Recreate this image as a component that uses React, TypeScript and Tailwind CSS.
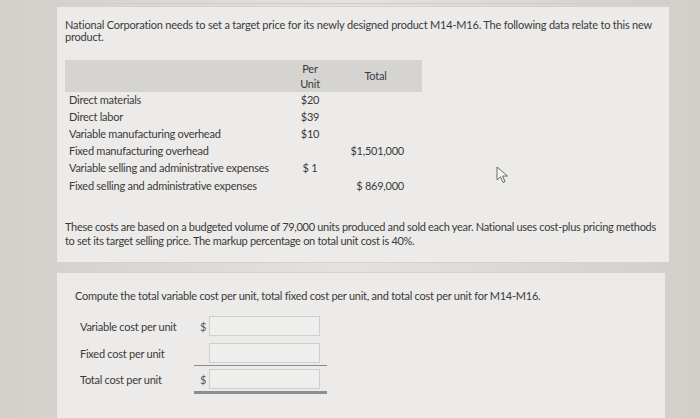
import React from "react";

const rows = [
  { label: "Direct materials", unit: "$20", total: "" },
  { label: "Direct labor", unit: "$39", total: "" },
  { label: "Variable manufacturing overhead", unit: "$10", total: "" },
  { label: "Fixed manufacturing overhead", unit: "", total: "$1,501,000" },
  { label: "Variable selling and administrative expenses", unit: "$ 1", total: "" },
  { label: "Fixed selling and administrative expenses", unit: "", total: "$ 869,000" },
];

const answers = [
  { label: "Variable cost per unit", dollar: true, line: "" },
  { label: "Fixed cost per unit", dollar: false, line: "single" },
  { label: "Total cost per unit", dollar: true, line: "double" },
];

function Cursor() {
  return (
    <svg className="absolute left-[496px] top-[166px]" width="14" height="18" viewBox="0 0 14 18">
      <path
        d="M1 1 L1 14 L4.5 10.8 L7 16.5 L9 15.6 L6.6 10 L11.5 10 Z"
        fill="#f4f4f2"
        stroke="#6b6b6b"
        strokeWidth="1"
        strokeLinejoin="round"
      />
    </svg>
  );
}

export default function App() {
  return (
    <div
      className="relative h-[418px] w-[700px] overflow-hidden bg-gradient-to-r from-[#d3cfcb] via-[#e4e2df] to-[#d2ceca] text-[#3a3a3a]"
      style={{ fontFamily: "Lato, 'Open Sans', sans-serif" }}
    >
      {/* previous card edge */}
      <div className="ml-[56px] h-[4px] w-[614px] border-b border-[#cfcdc9]" />

      {/* data card */}
      <div className="ml-[56px] mt-[2px] w-[614px] border border-[#d4d2ce] bg-[#ecebe9] pb-[14px] pl-[8px] pr-[6px] pt-[12px]">
        <p className="text-[11px] leading-[12px] tracking-[-0.2px]">
          National Corporation needs to set a target price for its newly designed product M14-M16. The following data relate to this new product.
        </p>

        <div className="mt-[17px] w-[357px] text-[11px] tracking-[-0.25px]">
          <div className="flex h-[32px] items-center bg-[#d5d4d1]">
            <div className="w-[222px]" />
            <div className="w-[46px] text-center leading-[15px]">
              Per
              <br />
              Unit
            </div>
            <div className="flex-1 pr-[4px] text-center">Total</div>
          </div>
          {rows.map((r, i) => (
            <div key={r.label} className={`flex items-center ${i === 5 ? "h-[19px]" : "h-[17px]"}`}>
              <div className="w-[222px] whitespace-nowrap pl-[4px]">{r.label}</div>
              <div className="w-[46px] text-center">{r.unit}</div>
              <div className="flex-1 pr-[18px] text-right">{r.total}</div>
            </div>
          ))}
        </div>

        <p className="mt-[24px] text-[11px] leading-[14px] tracking-[-0.3px]">
          These costs are based on a budgeted volume of 79,000 units produced and sold each year. National uses cost-plus pricing methods to set its target selling price. The markup percentage on total unit cost is 40%.
        </p>
      </div>

      {/* question card */}
      <div className="ml-[56px] mt-[9px] h-[160px] w-[610px] border border-[#d4d2ce] bg-[#ecebe9] pl-[18px] pt-[16px]">
        <p className="text-[11px] leading-[14px] tracking-[-0.25px]">
          Compute the total variable cost per unit, total fixed cost per unit, and total cost per unit for M14-M16.
        </p>

        <div className="mt-[13px] flex flex-col text-[11px] tracking-[-0.25px]">
          {answers.map((a) => (
            <div key={a.label} className="flex items-start">
              <div className="w-[119px] pl-[5px] pt-[3px]">{a.label}</div>
              <div
                className={`flex w-[133px] pl-[6px] ${
                  a.line === "single"
                    ? "mb-[3px] border-b border-[#8a8a8a] pb-[2px]"
                    : a.line === "double"
                    ? "border-b-[3px] border-[#8e8e8e] pb-[2px]"
                    : "mb-[4px] pb-[3px]"
                }`}
              >
                <span className="w-[9px] pt-[3px] text-[#555]">{a.dollar ? "$" : ""}</span>
                <div className="h-[20px] w-[111px] border border-[#cfcfcf] bg-[#eeeeec]" />
              </div>
            </div>
          ))}
        </div>
      </div>

      <Cursor />
    </div>
  );
}
